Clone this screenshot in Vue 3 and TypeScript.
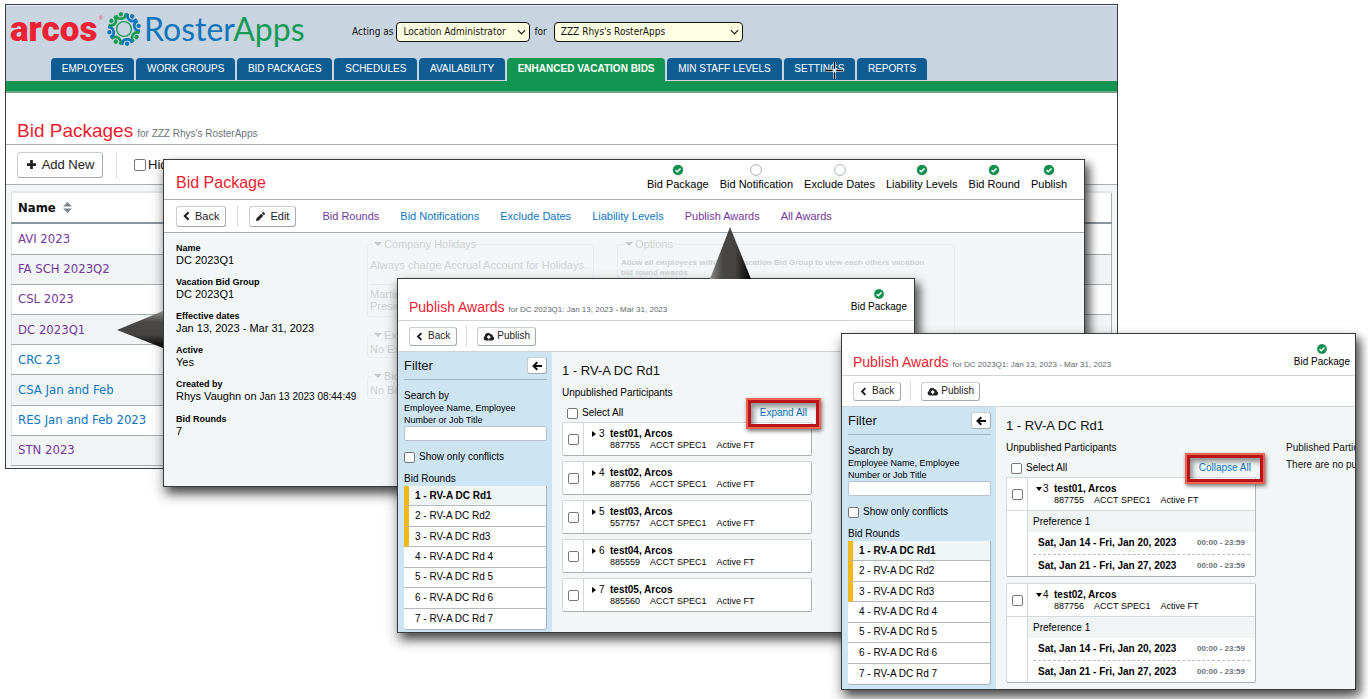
<script setup lang="ts">
import { ref } from 'vue'

interface Package { name: string; visited: boolean }
interface Step { label: string; done: boolean }
interface Participant { rank: number; name: string; badge: string }
interface AwardsWindow {
  id: string
  expanded: boolean
  toggle: string
  participants: Participant[]
}

const tabs: string[] = [
  'EMPLOYEES', 'WORK GROUPS', 'BID PACKAGES', 'SCHEDULES', 'AVAILABILITY',
  'ENHANCED VACATION BIDS', 'MIN STAFF LEVELS', 'SETTINGS', 'REPORTS',
]
const activeTab = ref('ENHANCED VACATION BIDS')

const packages: Package[] = [
  { name: 'AVI 2023', visited: true },
  { name: 'FA SCH 2023Q2', visited: true },
  { name: 'CSL 2023', visited: true },
  { name: 'DC 2023Q1', visited: true },
  { name: 'CRC 23', visited: false },
  { name: 'CSA Jan and Feb', visited: false },
  { name: 'RES Jan and Feb 2023', visited: false },
  { name: 'STN 2023', visited: true },
]

const steps: Step[] = [
  { label: 'Bid Package', done: true },
  { label: 'Bid Notification', done: false },
  { label: 'Exclude Dates', done: false },
  { label: 'Liability Levels', done: true },
  { label: 'Bid Round', done: true },
  { label: 'Publish', done: true },
]

const sections: Package[] = [
  { name: 'Bid Rounds', visited: true },
  { name: 'Bid Notifications', visited: false },
  { name: 'Exclude Dates', visited: false },
  { name: 'Liability Levels', visited: false },
  { name: 'Publish Awards', visited: true },
  { name: 'All Awards', visited: true },
]

const rounds: string[] = [
  '1 - RV-A DC Rd1', '2 - RV-A DC Rd2', '3 - RV-A DC Rd3', '4 - RV-A DC Rd 4',
  '5 - RV-A DC Rd 5', '6 - RV-A DC Rd 6', '7 - RV-A DC Rd 7',
]

const people: Participant[] = [
  { rank: 3, name: 'test01, Arcos', badge: '887755' },
  { rank: 4, name: 'test02, Arcos', badge: '887756' },
  { rank: 5, name: 'test03, Arcos', badge: '557757' },
  { rank: 6, name: 'test04, Arcos', badge: '885559' },
  { rank: 7, name: 'test05, Arcos', badge: '885560' },
]

const preferences: string[] = ['Sat, Jan 14 - Fri, Jan 20, 2023', 'Sat, Jan 21 - Fri, Jan 27, 2023']

const awards: AwardsWindow[] = [
  { id: 'collapsed', expanded: false, toggle: 'Expand All', participants: people },
  { id: 'expanded', expanded: true, toggle: 'Collapse All', participants: people.slice(0, 2) },
]

const green = '#149a54'
const blue = '#0f75bc'
const figures: { angle: number; color: string }[] = [
  { angle: -12, color: green }, { angle: 33, color: blue }, { angle: 78, color: blue },
  { angle: 123, color: green }, { angle: 168, color: blue }, { angle: 213, color: green },
  { angle: 258, color: blue }, { angle: 303, color: green },
]
</script>

<template>
  <main class="canvas">
    <section class="win win-list">
      <header class="banner">
        <div class="brand-row">
          <div class="brand">
            <span class="arcos">arcos</span>
            <span class="reg">®</span>
            <svg class="gear" viewBox="-18 -18 36 36" aria-hidden="true">
              <circle r="7.4" fill="none" :stroke="green" stroke-width="1.4" />
              <g v-for="f in figures" :key="f.angle" :transform="`rotate(${f.angle})`">
                <circle cx="0" cy="-15" r="2.2" :fill="f.color" />
                <path d="M-5 -15.2Q-4.4 -10.6 0 -10.6Q4.400 -10.6 5 -15.2" fill="none" :stroke="f.color" stroke-width="2.6" />
              </g>
            </svg>
            <span class="roster">Roster<b>Apps</b></span>
          </div>
          <div class="acting">
            <label for="role">Acting as</label>
            <span class="pick pick-role">
              <select id="role"><option>Location Administrator</option></select>
              <svg viewBox="0 0 10 6"><path d="M1 1l4 4 4-4" /></svg>
            </span>
            <label for="site">for</label>
            <span class="pick pick-site">
              <select id="site"><option>ZZZ Rhys's RosterApps</option></select>
              <svg viewBox="0 0 10 6"><path d="M1 1l4 4 4-4" /></svg>
            </span>
          </div>
        </div>
        <nav class="tabs">
          <a v-for="t in tabs" :key="t" href="#" :class="{ active: t === activeTab }" @click.prevent="activeTab = t">
            {{ t }}
            <svg v-if="t === 'SETTINGS'" class="cross" viewBox="0 0 20 20" aria-hidden="true">
              <path d="M10 1v18M1 10h18" stroke="#cfe0ee" stroke-width="3" />
              <path d="M10 1v7M10 12v7M1 10h7M12 10h7" stroke="#000" stroke-width="1.4" />
            </svg>
          </a>
        </nav>
      </header>
      <div class="list-title"><h1>Bid Packages</h1><span>for ZZZ Rhys's RosterApps</span></div>
      <div class="list-tools">
        <button type="button" class="btn btn-lg">
          <svg class="i-plus" viewBox="0 0 12 12"><path d="M6 1v10M1 6h10" stroke="#222" stroke-width="3" /></svg>
          Add New
        </button>
        <span class="rule"></span>
        <label class="hide"><input type="checkbox" />Hide Inactive</label>
        <a href="#" class="visited">Vacation Bid Groups</a>
      </div>
      <div class="list-body">
        <table>
          <thead>
            <tr>
              <th>Name
                <svg class="i-sort" viewBox="0 0 10 12"><path d="M5 0l5 5H0zM5 12l5-5H0z" fill="#7d888e" /></svg>
              </th>
            </tr>
          </thead>
          <tbody>
            <tr v-for="p in packages" :key="p.name">
              <td><a href="#" :class="{ visited: p.visited }">{{ p.name }}</a></td>
            </tr>
          </tbody>
        </table>
      </div>
    </section>

    <section class="win win-package">
      <svg class="pointer-left" viewBox="0 0 46 38" aria-hidden="true">
        <defs>
          <linearGradient id="pl" x1="0" y1="0" x2="0" y2="1">
            <stop offset="0" stop-color="#8a8a8a" /><stop offset=".3" stop-color="#4a4846" />
            <stop offset=".65" stop-color="#454341" /><stop offset="1" stop-color="#000" />
          </linearGradient>
        </defs>
        <path d="M0 19L46 0V37z" fill="url(#pl)" />
      </svg>
      <div class="clip">
        <div class="pkg-title">
          <h2>Bid Package</h2>
          <ol class="steps">
            <li v-for="s in steps" :key="s.label">
              <svg viewBox="0 0 12 12">
                <circle v-if="!s.done" cx="6" cy="6" r="5.4" fill="#fff" stroke="#aab0b4" />
                <g v-else>
                  <circle cx="6" cy="6" r="5.6" fill="#b9c9c0" /><circle cx="6" cy="6" r="5" fill="#0b8f4d" />
                  <path d="M3.6 6.1l1.7 1.7 3.2-3.3" fill="none" stroke="#fff" stroke-width="1.5" />
                </g>
              </svg>
              {{ s.label }}
            </li>
          </ol>
        </div>
        <div class="pkg-tools">
          <button type="button" class="btn">
            <svg class="i-chev" viewBox="0 0 8 12"><path d="M6.5 1.5L2 6l4.5 4.5" fill="none" stroke="#222" stroke-width="2.6" /></svg>
            Back
          </button>
          <span class="rule"></span>
          <button type="button" class="btn">
            <svg class="i-pen" viewBox="0 0 12 12"><path d="M0 12l.8-3.6L7 2.2 9.8 5 3.6 11.2zM7.8 1.4L8.900.3q.7-.5 1.4 0l1.400 1.400q.5.7 0 1.400l-1.100 1.100z" fill="#222" /></svg>
            Edit
          </button>
          <nav>
            <a v-for="s in sections" :key="s.name" href="#" :class="{ visited: s.visited }">{{ s.name }}</a>
          </nav>
        </div>
        <div class="pkg-body">
          <dl>
            <div><dt>Name</dt><dd>DC 2023Q1</dd></div>
            <div><dt>Vacation Bid Group</dt><dd>DC 2023Q1</dd></div>
            <div><dt>Effective dates</dt><dd>Jan 13, 2023 - Mar 31, 2023</dd></div>
            <div><dt>Active</dt><dd>Yes</dd></div>
            <div><dt>Created by</dt><dd>Rhys Vaughn on <small>Jan 13 2023 08:44:49</small></dd></div>
            <div><dt>Bid Rounds</dt><dd>7</dd></div>
          </dl>
          <div class="ghost">
            <fieldset>
              <legend><i></i>Company Holidays</legend>
              <p class="charge">Always charge Accrual Account for Holidays.</p>
              <p class="days">Martin Luther King Day<br />Presidents Day</p>
            </fieldset>
            <fieldset><legend><i></i>Exclude Dates</legend><p>No Exclude Dates</p></fieldset>
            <fieldset><legend><i></i>Bid Notifications</legend><p>No Bid Notifications</p></fieldset>
          </div>
          <div class="ghost ghost-options">
            <fieldset>
              <legend><i></i>Options</legend>
              <p>Allow all employees within the Vacation Bid Group to view each others vacation<br />bid round awards</p>
            </fieldset>
          </div>
        </div>
      </div>
    </section>

    <section v-for="w in awards" :key="w.id" class="win win-awards" :class="w.id">
      <svg v-if="!w.expanded" class="pointer-up" viewBox="0 0 42 52" aria-hidden="true">
        <defs>
          <linearGradient id="pu" x1="0" y1="0" x2="1" y2="0">
            <stop offset="0" stop-color="#8a8a8a" /><stop offset=".3" stop-color="#4a4846" />
            <stop offset=".62" stop-color="#454341" /><stop offset="1" stop-color="#000" />
          </linearGradient>
        </defs>
        <path d="M20 0L41 52H0z" fill="url(#pu)" />
      </svg>
      <div class="clip">
        <div class="aw-title">
          <h2>Publish Awards</h2>
          <span>for DC 2023Q1: Jan 13, 2023 - Mar 31, 2023</span>
          <div class="aw-step">
            <svg viewBox="0 0 12 12">
              <circle cx="6" cy="6" r="5.3" fill="#b9c9c0" /><circle cx="6" cy="6" r="4.7" fill="#0b8f4d" />
              <path d="M3.6 6.1l1.7 1.7 3.2-3.3" fill="none" stroke="#fff" stroke-width="1.5" />
            </svg>
            Bid Package
          </div>
        </div>
        <div class="aw-tools">
          <button type="button" class="btn btn-sm">
            <svg class="i-chev" viewBox="0 0 8 12"><path d="M6.5 1.5L2 6l4.5 4.5" fill="none" stroke="#222" stroke-width="2.6" /></svg>
            Back
          </button>
          <span class="rule"></span>
          <button type="button" class="btn btn-sm btn-pub">
            <svg class="i-cloud" viewBox="0 0 14 11">
              <path d="M3.2 10.5A3 3 0 0 1 1.9 4.9 3.9 3.9 0 0 1 9.1 2.8 2.4 2.4 0 0 1 11.7 5.2 2.8 2.8 0 0 1 11 10.5z" fill="#222" />
              <path d="M6.7 9V5.5M4.7 6.7l2-2.1 2 2.1" fill="none" stroke="#fff" stroke-width="1.4" />
            </svg>
            Publish
          </button>
        </div>
        <div class="aw-body">
          <aside>
            <div class="filter-head">
              <h3>Filter</h3>
              <button type="button" class="btn btn-arrow" aria-label="Collapse filter">
                <svg viewBox="0 0 10 10"><path d="M10 5H2M5.3 1.2L1.5 5l3.8 3.8" fill="none" stroke="#111" stroke-width="2" /></svg>
              </button>
            </div>
            <label class="search" :for="`q-${w.id}`">Search by<small>Employee Name, Employee Number or Job Title</small></label>
            <input :id="`q-${w.id}`" class="query" type="text" />
            <label class="conflicts"><input type="checkbox" />Show only conflicts</label>
            <h4>Bid Rounds</h4>
            <ul>
              <li v-for="(r, i) in rounds" :key="r" :class="{ marked: i < 3, current: i === 0 }">{{ r }}</li>
            </ul>
          </aside>
          <div class="pane">
            <h3>1 - RV-A DC Rd1</h3>
            <div class="columns">
              <div class="unpublished">
                <h4>Unpublished Participants</h4>
                <div class="select-row">
                  <label><input type="checkbox" />Select All</label>
                  <a href="#">{{ w.toggle }}</a>
                </div>
                <article v-for="p in w.participants" :key="p.rank">
                  <div class="tick"><input type="checkbox" :aria-label="p.name" /></div>
                  <div class="who">
                    <i class="caret"></i><span>{{ p.rank }}</span><b>{{ p.name }}</b>
                    <p><span>{{ p.badge }}</span><span>ACCT SPEC1</span><span>Active FT</span></p>
                  </div>
                  <div v-if="w.expanded" class="prefs">
                    <h5>Preference 1</h5>
                    <div v-for="d in preferences" :key="d" class="pref"><b>{{ d }}</b><small>00:00 - 23:59</small></div>
                  </div>
                </article>
              </div>
              <div v-if="w.expanded" class="published">
                <h4>Published Participants</h4>
                <p>There are no published participants</p>
              </div>
            </div>
          </div>
        </div>
      </div>
    </section>
  </main>
</template>

<style>
body { background: #fff; }
</style>

<style scoped>
* { box-sizing: border-box; margin: 0; padding: 0; }
.canvas {
  display: grid;
  grid-template-columns:
    minmax(0, 5fr) minmax(0, 158fr) minmax(0, 234fr) minmax(0, 444fr) minmax(0, 74fr)
    minmax(0, 170fr) minmax(0, 33fr) minmax(0, 238fr) minmax(0, 12fr);
  align-items: start;
  padding-bottom: 10px;
  font: 10px/12px "Liberation Sans", Arial, sans-serif;
  color: #111;
  overflow: hidden;
}
.win { position: relative; grid-row: 1; border: 1px solid #3c3c3c; background: #fff; min-width: 0; }
.win-list { grid-column: 2 / 8; margin-top: 4px; background: #f3f6f7; }
.win-package { grid-column: 3 / 7; margin-top: 159px; }
.collapsed { grid-column: 4 / 6; margin-top: 278px; }
.expanded { grid-column: 5 / 9; margin-top: 333px; }
.win-package, .win-awards { box-shadow: 5px 5px 9px rgba(0, 0, 0, .55), 0 8px 12px rgba(0, 0, 0, .35); }
.clip { overflow: hidden; }
a { color: #0b76bd; text-decoration: none; }
a.visited { color: #74389a; }
h1, h2, h3, h4, h5 { font-weight: normal; }
input[type="checkbox"] {
  appearance: none; flex: none; width: 11px; height: 11px;
  background: #fff; border: 1px solid #777; border-radius: 2px;
}

/* Banner */
.banner { background: #c8d5e0; border-top: 1px solid #e4edf3; border-bottom: 1px solid #7f9a8c; }
.banner::after { content: ""; display: block; height: 10px; background: #119550; border-bottom: 1px solid #5fae86; }
.brand-row { display: flex; align-items: flex-start; height: 52px; }
.brand { display: flex; align-items: flex-start; width: 346px; padding: 3px 0 0 4px; white-space: nowrap; }
.arcos { width: 89px; font: 900 35px/42px Roboto, "Liberation Sans", sans-serif; color: #ee2034; }
.reg { width: 7px; font-size: 5px; line-height: 8px; padding-top: 5px; color: #ee2034; }
.gear { width: 36px; height: 36px; margin-top: 2px; flex: none; }
.roster { margin-left: 2px; font: 32px/40px Lato, sans-serif; color: #1175bd; }
.roster b { font-weight: normal; color: #149a54; }
.acting { display: flex; align-items: center; height: 20px; margin-top: 16px; font-family: "DejaVu Sans Condensed", "DejaVu Sans", sans-serif; }
.pick { position: relative; height: 20px; margin: 0 8px 0 3px; }
.pick-role { width: 134px; margin-right: 4px; }
.pick-site { width: 189px; margin-left: 7px; }
.pick select {
  appearance: none; width: 100%; height: 100%; padding: 0 20px 0 6px; color: #111;
  background: #ffffe3; border: 1px solid #111; border-radius: 4px; font: inherit;
}
.pick svg { position: absolute; right: 4px; top: 7px; width: 9px; height: 6px; fill: none; stroke: #111; stroke-width: 1.3; pointer-events: none; }
.tabs { display: flex; align-items: flex-start; gap: 2px; width: 876px; margin-left: 45px; height: 23px; color: #fff; }
.tabs a {
  position: relative; flex: 1 1 auto; height: 22px; line-height: 22px; text-align: center; color: #fff;
  background: #0f5c93; border-radius: 4px 4px 0 0; white-space: nowrap;
}
.tabs a.active { height: 24px; background: #119550; font-weight: bold; }
.cross { position: absolute; right: 11px; top: 3px; width: 19px; height: 19px; }

/* Package list */
.list-title { display: flex; align-items: baseline; gap: 4px; height: 52px; padding: 26px 11px 0; background: #fff; border-bottom: 1px solid #a9aeb2; }
.list-title h1 { font-size: 19px; line-height: 24px; color: #ea1c2f; }
.list-title span { color: #6a757b; }
.list-tools { display: flex; align-items: center; height: 40px; padding: 0 11px; background: #fff; border-bottom: 1px solid #a9aeb2; font-size: 13px; }
.list-tools .rule { height: 26px; margin: 0 17px 0 13px; }
.rule { width: 1px; height: 20px; background: #d8dcde; }
.btn {
  display: inline-flex; align-items: center; justify-content: center; gap: 5px; height: 21px; padding: 0 6px;
  background: #fff; border: 1px solid #c9cdd0; border-right-color: #a3a9ad; border-bottom-color: #a3a9ad; border-radius: 3px;
  color: #222; font: 11px/14px "Liberation Sans", Arial, sans-serif; white-space: nowrap;
}
.btn-lg { height: 26px; width: 86px; font-size: 13px; }
.i-plus { width: 11px; height: 11px; }
.hide { display: flex; align-items: center; gap: 2px; width: 188px; }
.hide input { width: 12px; height: 12px; }
.list-body { padding: 6px 5px 2px; }
table { width: 100%; height: 275px; border-collapse: collapse; background: #fff; border-left: 1px solid #dde2e4; border-right: 1px solid #a9b0b4; font: 13px/16px "DejaVu Sans Condensed", "DejaVu Sans", sans-serif; }
th { height: 31px; padding: 0 6px; text-align: left; border-top: 2px solid #e3e8ea; border-bottom: 2px solid #8b969c; }
.i-sort { width: 9px; height: 11px; margin-left: 3px; vertical-align: -1px; }
td { padding: 0 6px; border-bottom: 1px solid #a6adb1; }
tbody tr:nth-child(even) { background: #f1f4f5; }

/* Package window */
.pointer-left { position: absolute; left: -47px; top: 151px; width: 46px; height: 38px; }
.pkg-title { display: flex; justify-content: space-between; align-items: flex-end; height: 40px; padding: 0 17px 8px 12px; border-bottom: 1px solid #a9aeb2; }
.pkg-title h2 { font-size: 16px; line-height: 16px; color: #ea1c2f; }
.steps { display: flex; gap: 11px; list-style: none; font-size: 11px; line-height: 14px; color: #000; }
.steps li { display: flex; flex-direction: column; align-items: center; gap: 1px; white-space: nowrap; }
.steps svg, .aw-step svg { width: 12px; height: 12px; }
.pkg-tools { display: flex; align-items: center; height: 33px; padding: 0 12px; border-bottom: 1px solid #a9aeb2; }
.pkg-tools .rule { margin: 0 11px; }
.pkg-tools nav { display: flex; gap: 21px; margin-left: 26px; font-size: 11px; line-height: 14px; white-space: nowrap; }
.i-chev { width: 7px; height: 10px; }
.i-pen { width: 9px; height: 9px; }
.pkg-body { display: flex; background: #f3f6f6; padding: 5px 0 36px; }
dl { display: flex; flex-direction: column; gap: 11px; width: 203px; flex: none; padding: 5px 0 0 12px; color: #000; white-space: nowrap; }
dt { font-weight: bold; font-size: 9px; line-height: 11px; }
dd { font-size: 11px; line-height: 12px; }
dd small { font-size: 10px; }
.ghost { flex: none; width: 227px; color: #ced2d3; font-size: 11px; line-height: 12px; }
.ghost fieldset { min-width: 0; border: 1px solid #e9eded; border-radius: 3px; margin-bottom: 12px; padding: 2px; }
.ghost legend { display: flex; align-items: center; gap: 2px; margin-left: 4px; line-height: 12px; }
.ghost legend i { border: 4px solid transparent; border-top-color: #c3c8c9; border-bottom: 0; }
.ghost p { white-space: nowrap; }
.ghost .charge { padding: 7px 0 13px; border-bottom: 1px solid #e6eaea; }
.ghost .days { padding: 3px 0 2px; }
.ghost-options { width: 338px; margin-left: 23px; }
.ghost-options fieldset { height: 200px; padding: 8px 2px 2px 3px; }
.ghost-options p { font-weight: bold; font-size: 8px; line-height: 10px; }

/* Publish Awards windows */
.pointer-up { position: absolute; bottom: 100%; left: 312px; width: 42px; height: 52px; }
.aw-title { display: flex; align-items: baseline; gap: 4px; height: 42px; padding: 20px 7px 0 11px; border-bottom: 1px solid #cfd3d5; white-space: nowrap; }
.aw-title h2 { font-size: 14px; line-height: 16px; color: #ea1c2f; }
.aw-title span { font-size: 8px; color: #5c676e; }
.aw-step { display: flex; flex-direction: column; align-items: center; align-self: flex-start; margin: -11px 0 0 auto; gap: 1px; color: #000; }
.expanded .aw-title { padding-right: 5px; }
.aw-tools { display: flex; align-items: center; height: 31px; padding: 0 11px; border-bottom: 1px solid #cfd3d5; }
.aw-tools .rule { margin: 0 10px 0 9px; }
.btn-sm { height: 19px; font-size: 10px; }
.btn-pub { gap: 2px; padding: 0 5px; }
.i-cloud { width: 12px; height: 9px; }
.btn-sm .i-chev { width: 7px; height: 9px; }
.aw-body { display: flex; }
aside { flex: none; width: 154px; padding: 5px 5px 2px 6px; background: #cde4f3; }
.filter-head { display: flex; justify-content: space-between; height: 23px; border-bottom: 1px solid #a3b8c5; }
.filter-head h3 { font-size: 13px; line-height: 18px; }
.btn-arrow { width: 20px; height: 17px; padding: 0; }
.btn-arrow svg { width: 10px; height: 10px; }
.search { display: block; margin-top: 10px; color: #000; }
.search small { display: block; font-size: 9px; line-height: 12px; }
.query { display: block; width: 100%; height: 15px; background: #fff; border: 1px solid #b5c3cc; border-radius: 2px; }
.conflicts { display: flex; align-items: center; gap: 4px; margin-top: 10px; color: #000; }
aside h4 { font-size: 10px; line-height: 12px; margin-top: 10px; color: #000; }
ul { display: grid; grid-auto-rows: 1fr; height: 144px; margin-top: 1px; list-style: none; background: #fff; border: 1px solid #a9b4ba; border-top: 0; border-left: 0; border-radius: 0 0 3px 3px; color: #000; }
ul li { display: flex; align-items: center; min-width: 0; padding-left: 11px; border-bottom: 1px solid #b4babd; }
ul li:last-child { border-bottom: 0; }
ul li.marked { border-left: 5px solid #f0b81a; padding-left: 6px; }
ul li.current { background: #f0f5f6; font-weight: bold; }
.pane { flex: 1 1 0; min-width: 0; padding: 11px 0 0 10px; background: #f3f6f6; }
.pane h3 { font-size: 13px; line-height: 16px; white-space: nowrap; }
.pane h4 { font-size: 10px; line-height: 12px; white-space: nowrap; }
.columns { display: flex; gap: 30px; margin-top: 8px; }
.unpublished { flex: none; width: 250px; color: #000; }
.select-row { display: flex; justify-content: space-between; align-items: center; height: 16px; padding: 0 5px; margin-top: 6px; margin-bottom: 1px; }
.select-row label { display: flex; align-items: center; gap: 4px; }
.select-row a { position: relative; }
.select-row a::after {
  content: ""; position: absolute; inset: -9px -14px -10px; pointer-events: none;
  border: 3px solid #f0644f; outline: 3px solid #b9141c; outline-offset: -5px;
  box-shadow: 1px 2px 4px rgba(0, 0, 0, .55), inset 3px 4px 5px 2px rgba(0, 0, 0, .4);
}
article {
  display: grid; grid-template-columns: 21px minmax(0, 1fr); margin-bottom: 5px; background: #fff;
  border: 1px solid #d3d8da; border-right-color: #b0b7bb; border-bottom-color: #a9b0b4; border-radius: 2px;
}
.expanded article { margin-bottom: 6px; }
.tick { display: flex; align-items: center; justify-content: center; border-right: 1px solid #d3d8da; }
.who { display: grid; grid-template-columns: 7px 11px 1fr; padding: 5px 0 4px 8px; line-height: 12px; }
.who p { grid-column: 3; display: flex; gap: 10px; font-size: 9px; line-height: 11px; }
.caret { align-self: center; justify-self: start; border: 3px solid transparent; border-left: 4px solid #000; border-right: 0; }
.expanded .caret { border: 3px solid transparent; border-top: 4px solid #000; border-bottom: 0; }
.expanded .who, .expanded .tick { border-bottom: 1px solid #d3d8da; }
.prefs { grid-column: 2; border-left: 1px solid #d3d8da; margin-left: -1px; }
h5 { font-size: 10px; line-height: 21px; padding-left: 5px; background: #f0f4f5; }
.pref { display: flex; align-items: center; justify-content: space-between; height: 22px; margin: 0 5px; padding: 0 5px; }
.pref + .pref { border-top: 1px dashed #b9bec1; }
.pref small { font-size: 8px; font-weight: bold; color: #6a747a; }
.published { flex: none; white-space: nowrap; }
.published p { margin-top: 5px; }
</style>
